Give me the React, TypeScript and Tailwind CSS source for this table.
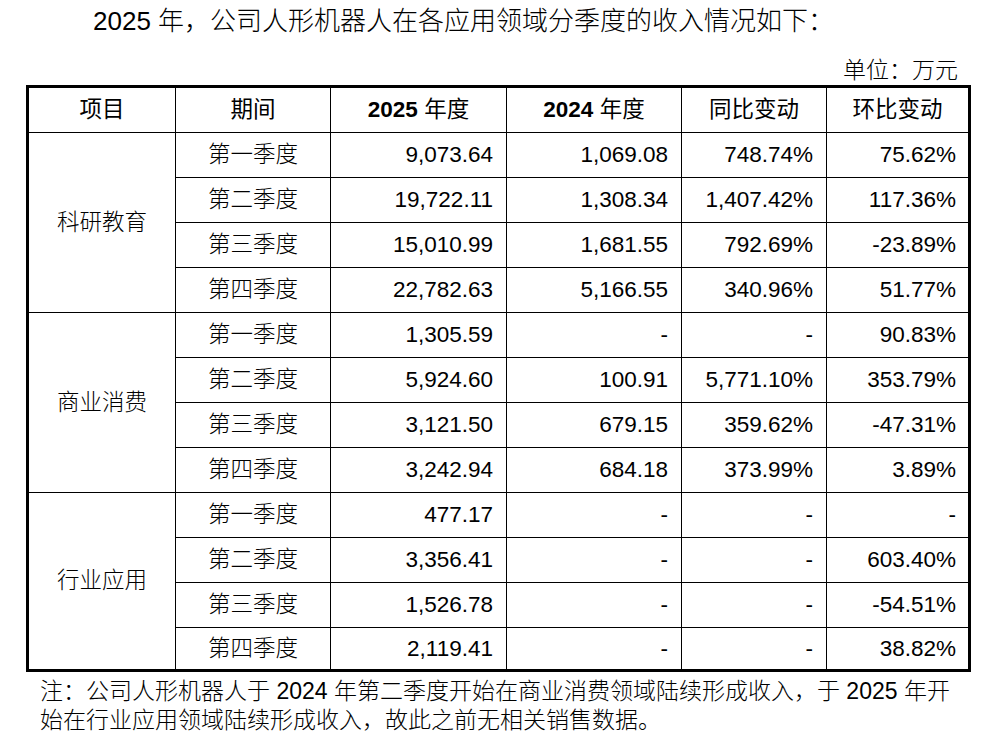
import React from "react";

type Row = [string, string, string, string, string];
type Group = { name: string; rows: Row[] };

const groups: Group[] = [
  {
    name: "科研教育",
    rows: [
      ["第一季度", "9,073.64", "1,069.08", "748.74%", "75.62%"],
      ["第二季度", "19,722.11", "1,308.34", "1,407.42%", "117.36%"],
      ["第三季度", "15,010.99", "1,681.55", "792.69%", "-23.89%"],
      ["第四季度", "22,782.63", "5,166.55", "340.96%", "51.77%"],
    ],
  },
  {
    name: "商业消费",
    rows: [
      ["第一季度", "1,305.59", "-", "-", "90.83%"],
      ["第二季度", "5,924.60", "100.91", "5,771.10%", "353.79%"],
      ["第三季度", "3,121.50", "679.15", "359.62%", "-47.31%"],
      ["第四季度", "3,242.94", "684.18", "373.99%", "3.89%"],
    ],
  },
  {
    name: "行业应用",
    rows: [
      ["第一季度", "477.17", "-", "-", "-"],
      ["第二季度", "3,356.41", "-", "-", "603.40%"],
      ["第三季度", "1,526.78", "-", "-", "-54.51%"],
      ["第四季度", "2,119.41", "-", "-", "38.82%"],
    ],
  },
];

const FONT = {
  fontFamily: '"Liberation Sans", "Noto Sans CJK SC", sans-serif',
};

export default function App() {
  return (
    <div
      className="w-[1000px] h-[738px] bg-white overflow-hidden flex flex-col text-black"
      style={FONT}
    >
      <div className="mt-[4px] pl-[40px] indent-[53px] text-[26px] leading-[34px] font-light whitespace-nowrap">
        2025 年，公司人形机器人在各应用领域分季度的收入情况如下：
      </div>
      <div className="mt-[17px] pr-[42px] text-right text-[23px] leading-[30px] font-light">
        单位：万元
      </div>
      <div className="ml-[26px] w-[945px] border-[3px] border-black">
        <div className="grid grid-cols-[147px_155px_176px_175px_145px_141px] grid-rows-[repeat(12,45px)_41px] text-[22.5px]">
          <div className="flex items-center justify-center border-r border-b border-black">项目</div>
          <div className="flex items-center justify-center border-r border-b border-black">期间</div>
          <div className="flex items-center justify-center border-r border-b border-black">
            <span className="font-bold">2025</span>&nbsp;年度
          </div>
          <div className="flex items-center justify-center border-r border-b border-black">
            <span className="font-bold">2024</span>&nbsp;年度
          </div>
          <div className="flex items-center justify-center border-r border-b border-black">同比变动</div>
          <div className="flex items-center justify-center border-b border-black">环比变动</div>
          {groups.map((g, gi) => {
            const lastGroup = gi === groups.length - 1;
            return (
              <React.Fragment key={g.name}>
                <div
                  className={
                    lastGroup
                      ? "row-span-4 flex items-center justify-center border-r border-black font-light"
                      : "row-span-4 flex items-center justify-center border-r border-b border-black font-light"
                  }
                >
                  {g.name}
                </div>
                {g.rows.map((r, ri) => {
                  const last = lastGroup && ri === g.rows.length - 1;
                  const b = last ? "" : " border-b";
                  return (
                    <React.Fragment key={ri}>
                      <div className={"flex items-center justify-center border-r border-black font-light" + b}>
                        {r[0]}
                      </div>
                      <div className={"flex items-center justify-end pr-[13px] border-r border-black" + b}>
                        {r[1]}
                      </div>
                      <div className={"flex items-center justify-end pr-[13px] border-r border-black" + b}>
                        {r[2]}
                      </div>
                      <div className={"flex items-center justify-end pr-[13px] border-r border-black" + b}>
                        {r[3]}
                      </div>
                      <div className={"flex items-center justify-end pr-[12px] border-black" + b}>
                        {r[4]}
                      </div>
                    </React.Fragment>
                  );
                })}
              </React.Fragment>
            );
          })}
        </div>
      </div>
      <div className="mt-[5px] pl-[40px] text-[23px] leading-[29px] font-light whitespace-nowrap">
        <div>注：公司人形机器人于 2024 年第二季度开始在商业消费领域陆续形成收入，于 2025 年开</div>
        <div>始在行业应用领域陆续形成收入，故此之前无相关销售数据。</div>
      </div>
    </div>
  );
}
